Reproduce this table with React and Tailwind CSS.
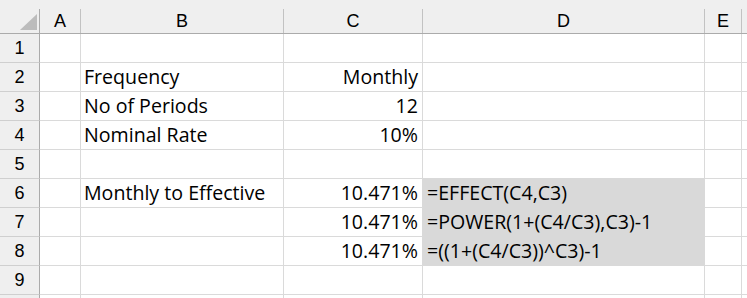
const columns = [
  { name: 'A', width: 'w-[41px]' },
  { name: 'B', width: 'w-[203px]' },
  { name: 'C', width: 'w-[139px]' },
  { name: 'D', width: 'w-[282px]' },
  { name: 'E', width: 'w-[37px]' },
]

const rows = [
  { n: 1 },
  { n: 2, B: 'Frequency', C: 'Monthly' },
  { n: 3, B: 'No of Periods', C: '12' },
  { n: 4, B: 'Nominal Rate', C: '10%' },
  { n: 5, fillBelow: true },
  { n: 6, B: 'Monthly to Effective', C: '10.471%', D: '=EFFECT(C4,C3)', filled: true },
  { n: 7, C: '10.471%', D: '=POWER(1+(C4/C3),C3)-1', filled: true },
  { n: 8, C: '10.471%', D: '=((1+(C4/C3))^C3)-1', filled: true },
  { n: 9 },
  { n: 10, hideLabel: true },
]

const cellFont = { fontFamily: '"Open Sans", "Liberation Sans", sans-serif' }
const headFont = { fontFamily: '"Liberation Sans", Arial, sans-serif' }

function HeaderRow() {
  return (
    <div className="flex h-[34px] bg-[#efefef] border-b border-[#ababab]" style={headFont}>
      <div className="w-[40px] shrink-0 pt-[9px]">
        <div className="h-full border-r border-[#ababab] flex items-end justify-end pb-[3px] pr-[2px]">
          <svg width="17" height="16" viewBox="0 0 17 16">
            <polygon points="17,0 17,16 0,16" fill="#bcbcbc" />
          </svg>
        </div>
      </div>
      {columns.map((col) => (
        <div key={col.name} className={`${col.width} shrink-0 pt-[9px]`}>
          <div className="h-full border-r border-[#c2c2c2] flex items-center justify-center text-[18px] text-black">
            {col.name}
          </div>
        </div>
      ))}
      <div className="flex-1" />
    </div>
  )
}

function Row({ row }) {
  const grid = 'border-r border-b border-[#dadada]'
  return (
    <div className="flex h-[29px]">
      <div
        className="w-[40px] shrink-0 bg-[#efefef] border-r border-b border-r-[#ababab] border-b-[#cfcfcf] flex items-center justify-center text-[18px] text-black"
        style={headFont}
      >
        {row.hideLabel ? null : row.n}
      </div>
      <div className={`w-[41px] shrink-0 ${grid}`} />
      <div className={`w-[203px] shrink-0 ${grid} pl-[3px] text-[19.6px] leading-[28px] text-black whitespace-nowrap`} style={cellFont}>
        {row.B}
      </div>
      <div
        className={`w-[139px] shrink-0 border-r border-b border-b-[#dadada] ${row.filled ? 'border-r-[#d9d9d9]' : 'border-r-[#dadada]'} pr-[4px] text-right text-[19.6px] leading-[28px] text-black whitespace-nowrap`}
        style={cellFont}
      >
        {row.C}
      </div>
      <div
        className={`w-[282px] shrink-0 border-r border-b ${row.filled ? 'bg-[#d9d9d9] border-[#d9d9d9]' : row.fillBelow ? 'border-r-[#dadada] border-b-[#d9d9d9]' : 'border-[#dadada]'} pl-[4px] text-[19.6px] leading-[28px] text-black whitespace-nowrap`}
        style={cellFont}
      >
        {row.D}
      </div>
      <div className={`w-[37px] shrink-0 ${grid}`} />
      <div className="flex-1 border-b border-[#dadada]" />
    </div>
  )
}

export default function App() {
  return (
    <div className="w-[747px] h-[298px] overflow-hidden bg-white">
      <HeaderRow />
      {rows.map((row) => (
        <Row key={row.n} row={row} />
      ))}
    </div>
  )
}
